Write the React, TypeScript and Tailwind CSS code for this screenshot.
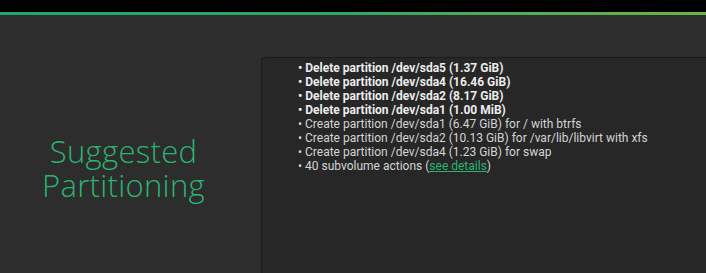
const actions = [
  { text: 'Delete partition /dev/sda5 (1.37 GiB)', bold: true },
  { text: 'Delete partition /dev/sda4 (16.46 GiB)', bold: true },
  { text: 'Delete partition /dev/sda2 (8.17 GiB)', bold: true },
  { text: 'Delete partition /dev/sda1 (1.00 MiB)', bold: true },
  { text: 'Create partition /dev/sda1 (6.47 GiB) for / with btrfs', bold: false },
  { text: 'Create partition /dev/sda2 (10.13 GiB) for /var/lib/libvirt with xfs', bold: false },
  { text: 'Create partition /dev/sda4 (1.23 GiB) for swap', bold: false },
];

export default function App() {
  return (
    <div className="flex h-[273px] w-[706px] flex-col overflow-hidden bg-black font-['Roboto',sans-serif]">
      <div className="h-[12px] bg-black" />
      <div className="h-[3px] bg-gradient-to-r from-[#1ea672] via-[#30a862] to-[#6ab443]" />
      <div className="flex flex-1 bg-[#2d2d2d]">
        <div className="flex w-[261px] shrink-0 items-center justify-center pt-[42px]">
          <h1 className="pr-[14px] pt-[6px] text-center font-['Open_Sans',sans-serif] text-[31px] font-light leading-[34px] tracking-[0.3px] text-[#2bb370]">
            Suggested
            <br />
            Partitioning
          </h1>
        </div>
        <div className="mt-[42px] flex-1 rounded-tl-[4px] border-l border-t border-[#1c1c1c] bg-[#272727] pl-[36px] pt-[3px]">
          <ul className="text-[12px] leading-[14px]">
            {actions.map((a) => (
              <li key={a.text} className={a.bold ? 'font-bold text-[#ececec]' : 'text-[#d4d4d4]'}>
                • {a.text}
              </li>
            ))}
            <li className="text-[#d4d4d4]">
              • 40 subvolume actions (<a className="text-[#2bb370] underline">see details</a>)
            </li>
          </ul>
        </div>
      </div>
    </div>
  );
}
